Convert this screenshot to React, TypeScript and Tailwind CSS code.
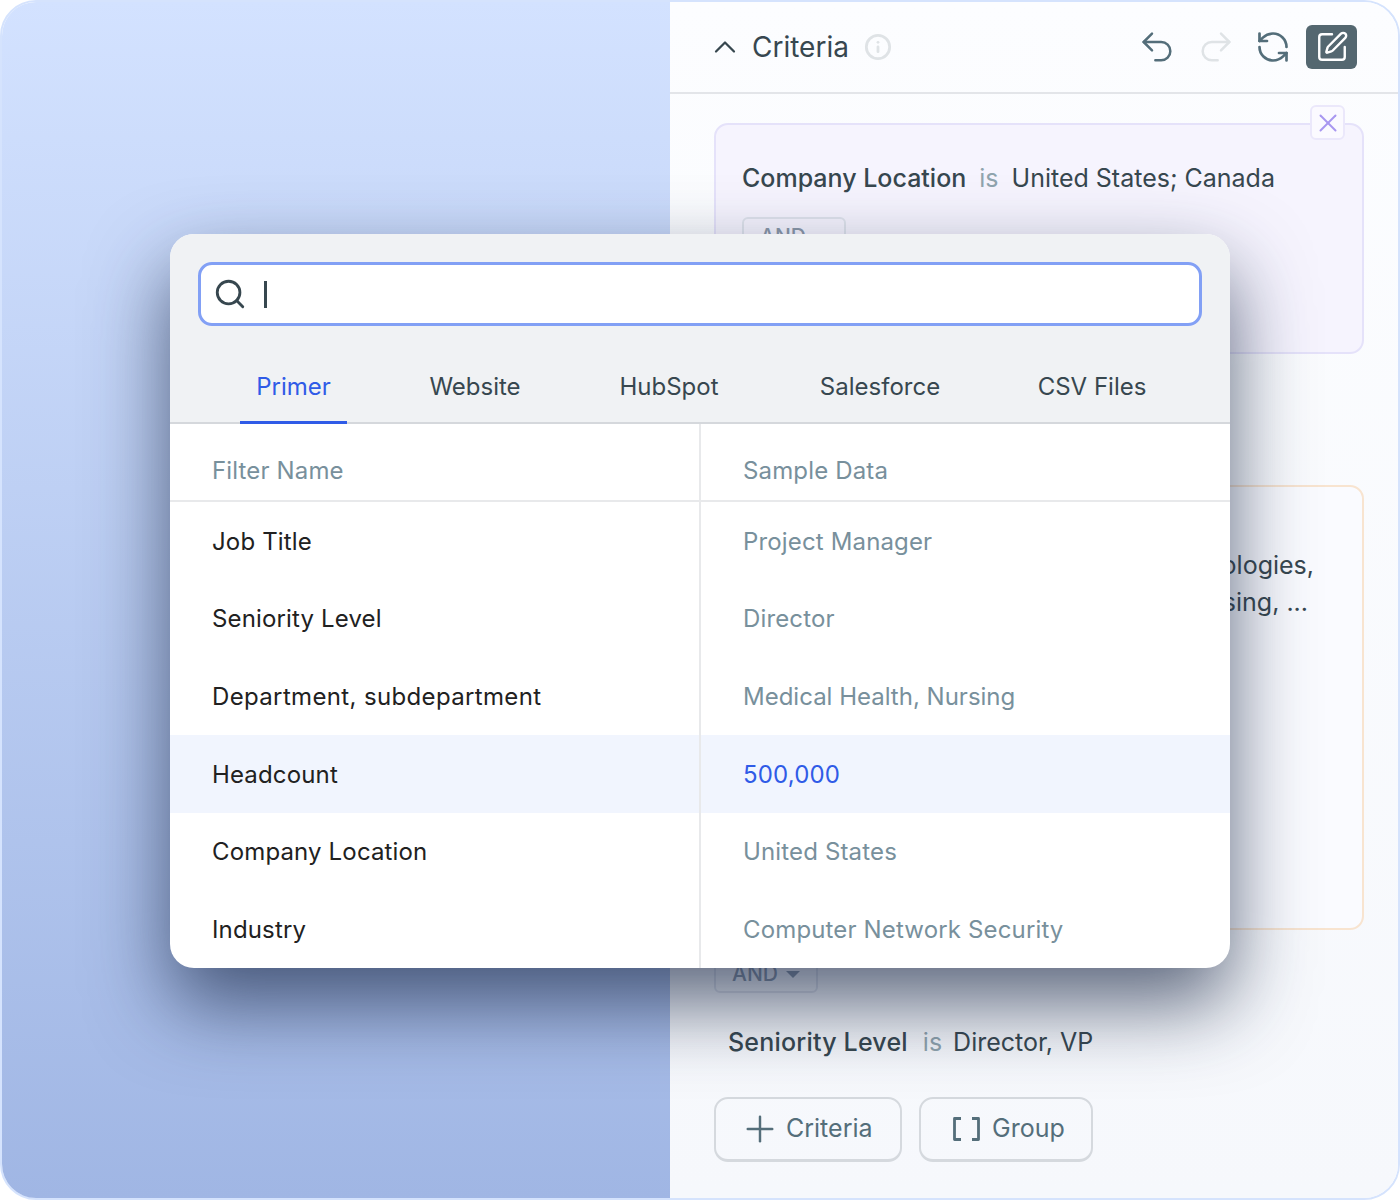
import { ChevronUp, Info, Plus, RefreshCcw, Redo2, Search, SquarePen, Undo2, X } from 'lucide-react';

const tabs = [
  { label: 'Primer', active: true, cls: 'w-[107px] ml-[70px]' },
  { label: 'Website', active: false, cls: 'w-[90px] ml-[83px]' },
  { label: 'HubSpot', active: false, cls: 'w-[102px] ml-[98px]' },
  { label: 'Salesforce', active: false, cls: 'w-[122px] ml-[99px]' },
  { label: 'CSV Files', active: false, cls: 'w-[106px] ml-[98px]' },
];

const rows = [
  { name: 'Job Title', sample: 'Project Manager' },
  { name: 'Seniority Level', sample: 'Director' },
  { name: 'Department, subdepartment', sample: 'Medical Health, Nursing', wide: true },
  { name: 'Headcount', sample: '500,000', active: true },
  { name: 'Company Location', sample: 'United States' },
  { name: 'Industry', sample: 'Computer Network Security' },
];

function AndButton({ className }: { className: string }) {
  return (
    <div className={`flex h-[40px] w-[104px] shrink-0 items-center justify-center gap-2 rounded-md border-2 border-[#dfe3ec] text-[21px] font-medium leading-none text-[#8a97a8] ${className}`}>
      AND
      <span className="mt-[2px] h-0 w-0 border-x-[7px] border-t-[7px] border-x-transparent border-t-[#8a97a8]" />
    </div>
  );
}

function FilterModal() {
  return (
    <div className="absolute left-[168px] top-[232px] z-10 w-[1060px] overflow-hidden rounded-[24px] bg-white shadow-[0_36px_80px_rgba(25,40,70,0.7)]">
      <div className="bg-[#f0f2f4] px-[28px] pt-[28px]">
        <div className="flex h-[64px] items-center gap-[17px] rounded-[14px] border-[3px] border-[#82a0f5] bg-white pl-[12px]">
          <Search className="h-[34px] w-[34px] text-[#37474f]" strokeWidth={2} />
          <span className="h-[27px] w-[3px] bg-[#37474f]" />
        </div>
        <div className="-mx-[28px] mt-[26px] flex h-[72px] border-b-2 border-[#d5d8dc]">
          {tabs.map((t) => (
            <div
              key={t.label}
              className={`-mb-[2px] flex justify-center pt-[17px] text-[24px] whitespace-nowrap ${t.cls} ${
                t.active ? 'border-b-[3px] border-[#2f5be7] text-[#2f5be7]' : 'text-[#37474f]'
              }`}
            >
              {t.label}
            </div>
          ))}
        </div>
      </div>
      <div className="grid h-[78px] grid-cols-[531px_1fr] border-b-2 border-[#e8e9eb] text-[24px] tracking-[0.15px] text-[#78909c]">
        <div className="flex items-center border-r-2 border-[#e8e9eb] pl-[42px] pt-[17px]">Filter Name</div>
        <div className="flex items-center pl-[42px] pt-[17px]">Sample Data</div>
      </div>
      <div className="grid h-[466px] grid-rows-6">
        {rows.map((r) => (
          <div key={r.name} className={`grid grid-cols-[531px_1fr] text-[24px] tracking-[0.15px] ${r.active ? 'bg-[#f1f5fe]' : ''}`}>
            <div className={`flex items-center border-r-2 border-[#e8e9eb] pl-[42px] pt-[2px] text-[#212121] ${r.wide ? 'tracking-[0.35px]' : ''}`}>{r.name}</div>
            <div className={`flex items-center pl-[42px] pt-[2px] ${r.active ? 'text-[#2f5be7]' : 'text-[#78909c]'} ${r.wide ? 'tracking-normal' : ''}`}>{r.sample}</div>
          </div>
        ))}
      </div>
    </div>
  );
}

export default function App() {
  return (
    <div className="h-[1200px] w-[1400px] bg-white font-['Inter','Liberation_Sans',sans-serif]">
      <div className="relative flex h-full w-full overflow-hidden rounded-[36px] border-2 border-[#d5e3fd]">
        <div className="h-full w-[668px] shrink-0 bg-gradient-to-b from-[#d3e2ff] to-[#a0b6e4]" />
        <div className="flex h-full flex-1 flex-col bg-gradient-to-b from-[#fcfdff] to-[#f6f8fc]">
          <div className="flex h-[92px] shrink-0 items-center border-b-2 border-[#e3e5e9] pl-[44px] pr-[41px]">
            <ChevronUp className="-ml-[7px] h-[36px] w-[36px] text-[#37474f]" strokeWidth={1.5} />
            <span className="ml-[9px] text-[28px] text-[#37474f]">Criteria</span>
            <Info className="ml-[15px] h-[28px] w-[28px] text-[#dfe3e6]" strokeWidth={2.4} />
            <div className="ml-auto flex items-center">
              <Undo2 className="h-[40px] w-[40px] text-[#546e7a]" strokeWidth={1.5} />
              <Redo2 className="ml-[19px] h-[40px] w-[40px] text-[#dfe3e6]" strokeWidth={1.5} />
              <RefreshCcw className="ml-[19px] h-[36px] w-[36px] text-[#546e7a]" strokeWidth={1.8} />
              <div className="ml-[15px] flex h-[44px] w-[51px] items-center justify-center rounded-md bg-[#546770]">
                <SquarePen className="h-[34px] w-[34px] text-white" strokeWidth={1.7} />
              </div>
            </div>
          </div>
          <div className="flex flex-1 flex-col pl-[44px] pt-[29px]">
            <div className="relative h-[231px] w-[650px] rounded-[14px] border-2 border-[#e5e2fa] bg-[#f6f4fe] pl-[26px] pt-[35px]">
              <div className="absolute -top-[20px] right-[17px] flex h-[35px] w-[35px] items-center justify-center rounded-md border-2 border-[#ebe8fb] bg-[#fbfaff]">
                <X className="h-[30px] w-[30px] text-[#a897f0]" strokeWidth={1.6} />
              </div>
              <p className="text-[25px] text-[#37474f]">
                <span className="font-medium">Company Location</span>
                <span className="ml-[13px] text-[#90a4ae]">is</span>
                <span className="ml-[13px]">United States; Canada</span>
              </p>
              <AndButton className="mt-[19px]" />
            </div>
            <div className="mt-[131px] h-[445px] w-[650px] rounded-[14px] border-2 border-[#f8e4d0] bg-[#fafbff] pr-[48px] pt-[60px]">
              <div className="flex flex-col items-end text-[25px] leading-[37px] text-[#37474f]">
                <span>Technologies,</span>
                <span className="mr-[6px]">Nursing, ...</span>
              </div>
            </div>
            <AndButton className="mt-[23px]" />
            <p className="ml-[14px] mt-[31px] text-[25px] text-[#37474f]">
              <span className="font-medium tracking-[0.2px]">Seniority Level</span>
              <span className="ml-[15px] text-[#90a4ae]">is</span>
              <span className="ml-[11px]">Director, VP</span>
            </p>
            <div className="mt-[35px] flex gap-[17px]">
              <div className="flex h-[65px] w-[188px] items-center rounded-[14px] border-2 border-b-[3px] border-[#d5d9de] pl-[23px] text-[25px] text-[#546e7a]">
                <Plus className="h-[42px] w-[42px]" strokeWidth={1.4} />
                <span className="ml-[5px]">Criteria</span>
              </div>
              <div className="flex h-[65px] w-[174px] items-center rounded-[14px] border-2 border-b-[3px] border-[#d5d9de] pl-[32px] text-[25px] text-[#546e7a]">
                <svg viewBox="0 0 27 24" className="h-[24px] w-[27px]" fill="none" stroke="currentColor" strokeWidth="2.8" strokeLinejoin="round">
                  <path d="M8 1.5H1.5V22.5H8M19 1.5H25.5V22.5H19" />
                </svg>
                <span className="ml-[12px]">Group</span>
              </div>
            </div>
          </div>
        </div>
        <FilterModal />
      </div>
    </div>
  );
}
